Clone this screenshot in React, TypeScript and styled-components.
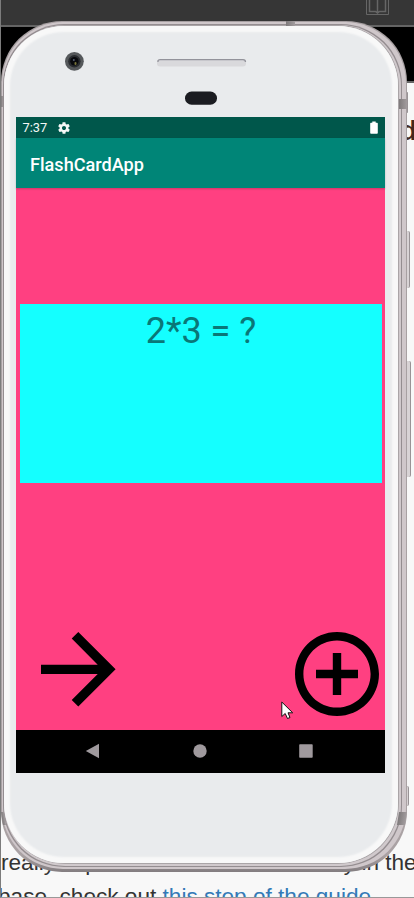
import React from 'react';
import styled, { createGlobalStyle } from 'styled-components';

const GlobalStyle = createGlobalStyle`
  * { box-sizing: border-box; }
  body { margin: 0; background: #f8f8f8; }
`;

const Desktop = styled.div`
  display: grid;
  width: 414px;
  height: 898px;
  overflow: hidden;
  font-family: Roboto, sans-serif;
  & > * { grid-area: 1 / 1; }
`;

const Browser = styled.div`
  display: flex;
  flex-direction: column;
  width: 414px;
  height: 898px;
  overflow: hidden;
  background: #f8f8f8;
  border-left: 1px solid #7c7c7c;
  border-bottom: 1px solid #999;
  font-family: 'Liberation Sans', Arial, sans-serif;
`;

const Toolbar = styled.div`
  display: flex;
  justify-content: flex-end;
  flex: none;
  height: 27px;
  padding-right: 25px;
  background: #363636;
  border-bottom: 2px solid #646464;
`;

const BlackBand = styled.div`
  flex: none;
  height: 56px;
  background: #000;
  border-bottom: 2px solid #666;
`;

const Heading = styled.div`
  flex: none;
  height: 763px;
  padding: 34px 0 0 399px;
  font-size: 28px;
  line-height: 28px;
  font-weight: 700;
  color: #43291f;
  white-space: nowrap;
`;

const Line = styled.div`
  display: flex;
  flex: none;
  height: 34px;
  line-height: 34px;
  font-size: 22.6px;
  color: #333;
  white-space: pre;
`;

const Fragment = styled.span<{ $start?: number }>`
  margin-left: ${(p) => p.$start ?? 0}px;
`;

const GuideLink = styled.span`
  color: #337ab7;
`;

const Phone = styled.div`
  position: relative;
  width: 406px;
  height: 851px;
  margin: 21px 0 0 1px;
`;

const OuterRim = styled.div`
  height: 100%;
  padding: 1px 1px 3px 1px;
  border-radius: 61px;
  background: linear-gradient(#a69fa1, #aaa2a4 98%, #837d80);
`;

const MiddleRim = styled.div`
  height: 100%;
  padding: 2px 4px 2px 1px;
  border-radius: 61px;
  background: #cfc7ca;
`;

const RimGroove = styled.div`
  height: 100%;
  padding: 1px;
  border-radius: 61px;
  background: #948d90;
`;

const InnerRim = styled.div`
  height: 100%;
  padding: 0 2px 2px 0;
  border-radius: 61px;
  background: #d0c9cc;
`;

const InnerLine = styled.div`
  height: 100%;
  padding: 1px 1px 1px 0;
  border-radius: 61px;
  background: #aaa5a7;
`;

const Face = styled.div`
  display: flex;
  flex-direction: column;
  height: 100%;
  padding: 91px 12px 0 12px;
  border-radius: 60px;
  background: #e9ebed;
  box-shadow: inset 0 0 2px 6px #f8f8f8;
`;

const Button = styled.i<{ $top: number; $height: number; $width: number }>`
  position: absolute;
  left: 406px;
  top: ${(p) => p.$top}px;
  width: ${(p) => p.$width}px;
  height: ${(p) => p.$height}px;
  border-right: 1px solid #999396;
  background: #d8d3d5;
  border-radius: 0 2px 2px 0;
`;

const Antenna = styled.i<{ $x: number; $y: number; $w: number; $h: number; $tilt?: number }>`
  position: absolute;
  left: ${(p) => p.$x}px;
  top: ${(p) => p.$y}px;
  width: ${(p) => p.$w}px;
  height: ${(p) => p.$h}px;
  background: linear-gradient(90deg, #7e7a7b, #a29c9e);
  transform: skewX(${(p) => p.$tilt ?? 0}deg);
`;

const Hardware = styled.svg`
  position: absolute;
  left: 62px;
  top: 28px;
`;

const Screen = styled.div`
  display: flex;
  flex-direction: column;
  width: 369px;
  height: 656px;
  background: #ff4081;
`;

const StatusBar = styled.div`
  display: flex;
  align-items: center;
  flex: none;
  height: 21px;
  padding: 0 7px 0 6.5px;
  background: #00574b;
  color: #f5f8f7;
  font-size: 12.8px;
`;

const Clock = styled.span`
  width: 34px;
`;

const Spacer = styled.span`
  flex: 1;
`;

const AppBar = styled.header`
  flex: none;
  height: 50px;
  padding: 1px 14px 0;
  line-height: 51px;
  background: #008577;
  color: #fff;
  font-size: 18.1px;
  font-weight: 500;
  box-shadow: 0 1px 2px rgba(0, 0, 0, 0.2);
  z-index: 1;
`;

const Content = styled.main`
  display: flex;
  flex-direction: column;
  justify-content: space-between;
  flex: 1;
  padding: 116px 3px 14px 4px;
`;

const Card = styled.section`
  height: 179px;
  padding-top: 5px;
  background: #14ffff;
  color: #0a7777;
  font-size: 36px;
  line-height: 44px;
  text-align: center;
`;

const Actions = styled.div`
  display: flex;
  align-items: flex-start;
  justify-content: space-between;
  padding: 0 3px 0 21.3px;
`;

const NavBar = styled.nav`
  display: flex;
  align-items: center;
  gap: 92.7px;
  flex: none;
  height: 43px;
  padding: 0 0 1px 69px;
  background: #000;
`;

const Pointer = styled.svg`
  position: absolute;
  left: 280px;
  top: 680px;
`;

export default function App() {
  return (
    <>
      <GlobalStyle />
      <Desktop>
        <Browser>
          <Toolbar>
            <svg width="23" height="15" viewBox="0 0 23 15" fill="none" stroke="#666">
              <path d="M.5 0V14.5H22.5V0" />
              <path d="M3.5 0V11.5H9.5L11.5 13L13.5 11.5H19.5V0M11.5 0V12" strokeWidth="1.5" />
            </svg>
          </Toolbar>
          <BlackBand />
          <Heading>d</Heading>
          <Line>
            <Fragment>really</Fragment>
            <Fragment $start={24}> p</Fragment>
            <Fragment $start={246}>y in the</Fragment>
          </Line>
          <Line>
            <Fragment $start={-3}>base, check out </Fragment>
            <GuideLink>this step of the guide</GuideLink>.
          </Line>
        </Browser>
        <Phone>
          <Button $top={210} $height={57} $width={3} />
          <Button $top={340} $height={116} $width={4} />
          <Button $top={71} $height={21} $width={1} />
          <Button $top={765} $height={20} $width={2} />
          <OuterRim>
            <MiddleRim>
              <RimGroove>
                <InnerRim>
                  <InnerLine>
                    <Face>
                      <Screen>
                        <StatusBar>
                          <Clock>7:37</Clock>
                          <svg width="14" height="14" viewBox="0 0 24 24" fill="#f5f8f7">
                            <path d="M19.43 12.98c.04-.32.07-.64.07-.98s-.03-.66-.07-.98l2.11-1.65c.19-.15.24-.42.12-.64l-2-3.46c-.12-.22-.39-.3-.61-.22l-2.49 1c-.52-.4-1.08-.73-1.69-.98l-.38-2.65C14.46 2.18 14.25 2 14 2h-4c-.25 0-.46.18-.49.42l-.38 2.65c-.61.25-1.17.59-1.69.98l-2.49-1c-.23-.09-.49 0-.61.22l-2 3.46c-.13.22-.07.49.12.64l2.11 1.65c-.04.32-.07.65-.07.98s.03.66.07.98l-2.11 1.65c-.19.15-.24.42-.12.64l2 3.46c.12.22.39.3.61.22l2.49-1c.52.4 1.08.73 1.69.98l.38 2.65c.03.24.24.42.49.42h4c.25 0 .46-.18.49-.42l.38-2.65c.61-.25 1.17-.59 1.69-.98l2.49 1c.23.09.49 0 .61-.22l2-3.46c.12-.22.07-.49-.12-.64l-2.11-1.65zM12 15.5c-1.93 0-3.5-1.57-3.5-3.5s1.57-3.5 3.5-3.5 3.5 1.57 3.5 3.5-1.57 3.5-3.5 3.5z" />
                          </svg>
                          <Spacer />
                          <svg width="8" height="13" viewBox="0 0 8 13" fill="#fff">
                            <path d="M2.3 0.5h3.4v1.3H7c.5 0 .8.3.8.8v9.4c0 .5-.3.8-.8.8H1c-.5 0-.8-.3-.8-.8V2.6c0-.5.3-.8.8-.8h1.3z" />
                          </svg>
                        </StatusBar>
                        <AppBar>FlashCardApp</AppBar>
                        <Content>
                          <Card>2*3 = ?</Card>
                          <Actions>
                            <svg width="74.6" height="74.6" viewBox="4 4 16 16">
                              <path d="M12 4l-1.41 1.41L16.17 11H4v2h12.17l-5.58 5.59L12 20l8-8z" />
                            </svg>
                            <svg width="84" height="84" viewBox="2 2 20 20">
                              <path d="M13 7h-2v4H7v2h4v4h2v-4h4v-2h-4V7zm-1-5C6.48 2 2 6.48 2 12s4.48 10 10 10 10-4.48 10-10S17.52 2 12 2zm0 18c-4.41 0-8-3.59-8-8s3.59-8 8-8 8 3.59 8 8-3.59 8-8 8z" />
                            </svg>
                          </Actions>
                        </Content>
                        <NavBar>
                          <svg width="15" height="16" viewBox="0 0 15 16">
                            <path d="M14 .8V15.3L.8 8z" fill="#9f999d" />
                          </svg>
                          <svg width="14" height="14" viewBox="0 0 14 14">
                            <circle cx="7" cy="7" r="6.7" fill="#9f999d" />
                          </svg>
                          <svg width="14" height="14" viewBox="0 0 14 14">
                            <rect x=".2" y=".2" width="13.5" height="13.6" rx=".8" fill="#9f999d" />
                          </svg>
                        </NavBar>
                      </Screen>
                    </Face>
                  </InnerLine>
                </InnerRim>
              </RimGroove>
            </MiddleRim>
          </OuterRim>
          <Antenna $x={285} $y={0} $w={9} $h={5} />
          <Antenna $x={0} $y={75} $w={2} $h={11} />
          <Antenna $x={398} $y={78} $w={8} $h={10} />
          <Antenna $x={1} $y={791} $w={3} $h={13} $tilt={9} />
          <Antenna $x={397} $y={791} $w={8} $h={13} $tilt={-9} />
          <Hardware width="190" height="58" viewBox="0 0 190 58">
            <circle cx="11.4" cy="12.3" r="9.4" fill="#55585b" />
            <circle cx="11.4" cy="12.3" r="6.2" fill="#292c30" />
            <circle cx="11.4" cy="12.3" r="4.2" fill="#08090d" />
            <circle cx="10.8" cy="11" r="1" fill="#555d70" />
            <rect x="11.5" y="13" width="2" height="3" rx="1" fill="#77733a" />
            <rect x="94" y="10" width="89" height="7.5" rx="3" fill="#d9d9dc" />
            <path d="M95 13V11.8Q95.5 10.6 97 10.6H180Q182.5 10.6 182.5 13" fill="none" stroke="#93939b" strokeWidth="1.3" />
            <rect x="122" y="42.5" width="32" height="13.3" rx="6.65" fill="#1b1c21" />
          </Hardware>
          <Pointer width="13" height="19" viewBox="0 0 13 19">
            <path d="M.8 1V15.5L4.2 12.5L6.5 17.5L9 16.5L7 11.8H11.7Z" fill="#fff" stroke="#111" strokeWidth="1" />
          </Pointer>
        </Phone>
      </Desktop>
    </>
  );
}
